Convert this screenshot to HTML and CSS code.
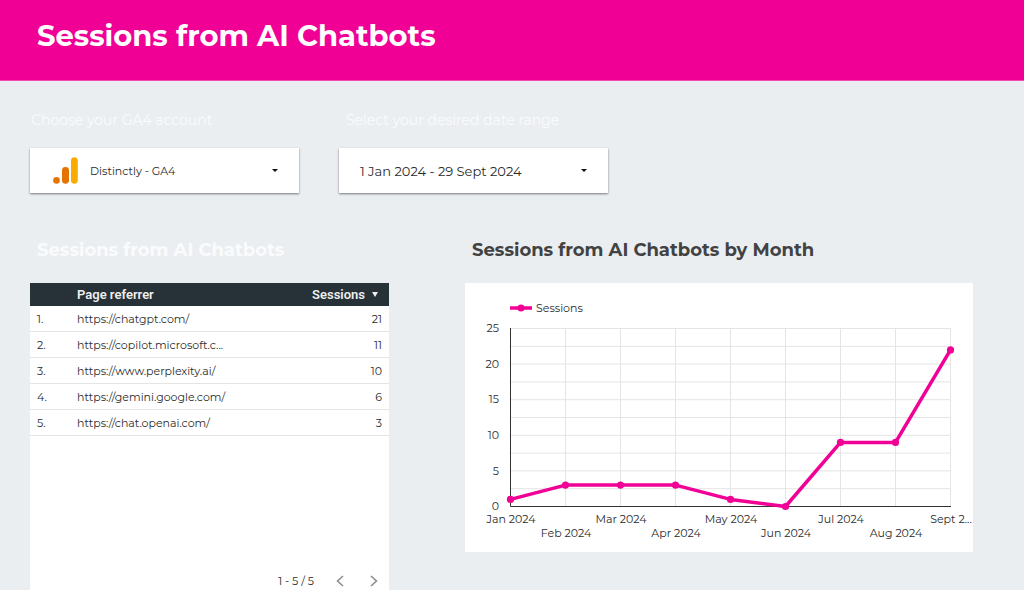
FILE: index.html
```html
<!DOCTYPE html>
<html lang="en-GB">
<head>
<meta charset="utf-8">
<meta name="viewport" content="width=device-width, initial-scale=1">
<title>Sessions from AI Chatbots</title>
<link rel="stylesheet" href="styles.css">
</head>
<body>
<header class="banner">
  <h1 class="banner-title">Sessions from AI Chatbots</h1>
</header>
<main class="content">
  <section class="filters">
    <div class="filter">
      <label class="filter-label" for="account">Choose your GA4 account</label>
      <div class="control account">
        <svg class="ga-logo" viewBox="0 0 25 27" aria-hidden="true">
          <circle cx="3.5" cy="23.4" r="3.3" fill="#e37400"/>
          <rect x="9" y="10" width="7" height="16.7" rx="3.4" fill="#e37400"/>
          <rect x="18" y="0.3" width="6.8" height="26.4" rx="3.4" fill="#f9ab00"/>
        </svg>
        <select class="account-select" id="account">
          <option>Distinctly - GA4</option>
        </select>
        <svg class="caret" viewBox="0 0 6 3" aria-hidden="true"><path d="M0 0h6L3 3z"/></svg>
      </div>
    </div>
    <div class="filter">
      <label class="filter-label date-label" for="dates">Select your desired date range</label>
      <button class="control date" id="dates" type="button" aria-haspopup="dialog">
        <span class="date-text">1 Jan 2024 - 29 Sept 2024</span>
        <svg class="caret" viewBox="0 0 6 3" aria-hidden="true"><path d="M0 0h6L3 3z"/></svg>
      </button>
    </div>
  </section>

  <div class="reports">
    <section class="report">
      <h2 class="report-title light">Sessions from AI Chatbots</h2>
      <div class="panel table-panel">
        <table class="referrers">
          <thead>
            <tr>
              <th class="rank"></th>
              <th>Page referrer</th>
              <th class="count" aria-sort="descending">Sessions<svg class="sort" viewBox="0 0 6 5" aria-hidden="true"><path d="M0 0h6L3 5z"/></svg></th>
            </tr>
          </thead>
          <tbody>
            <tr><td>1.</td><td>https://chatgpt.com/</td><td class="count">21</td></tr>
            <tr><td>2.</td><td>https://copilot.microsoft.c...</td><td class="count">11</td></tr>
            <tr><td>3.</td><td>https://www.perplexity.ai/</td><td class="count">10</td></tr>
            <tr><td>4.</td><td>https://gemini.google.com/</td><td class="count">6</td></tr>
            <tr><td>5.</td><td>https://chat.openai.com/</td><td class="count">3</td></tr>
          </tbody>
        </table>
        <nav class="pager" aria-label="Table pages">
          <span>1 - 5 / 5</span>
          <button class="page-button" type="button" aria-label="Previous page"><svg viewBox="0 0 8 12" aria-hidden="true"><path d="M7 1L1.5 6L7 11"/></svg></button>
          <button class="page-button" type="button" aria-label="Next page"><svg viewBox="0 0 8 12" aria-hidden="true"><path d="M1 1L6.5 6L1 11"/></svg></button>
        </nav>
      </div>
    </section>

    <section class="report">
      <h2 class="report-title">Sessions from AI Chatbots by Month</h2>
      <div class="panel">
        <svg class="chart" viewBox="0 0 508 269" role="img" aria-label="Sessions by month, January to September 2024">
          <path class="grid" d="M45 45.500H486M45 63.300H486M45 81.100H486M45 98.900H486M45 116.700H486M45 134.500H486M45 152.300H486M45 170.100H486M45 187.900H486M45 205.700H486M100.500 45V223M155.500 45V223M210.500 45V223M265.500 45V223M320.500 45V223M375.500 45V223M430.500 45V223M485.500 45V223"/>
          <path class="axis" d="M45.500 45V223.500H486"/>
          <polyline class="series" points="45.5,216.4 100.5,202.1 155.5,202.1 210.5,202.1 265.5,216.4 320.5,223.5 375.5,159.4 430.5,159.4 485.5,66.9"/>
          <g class="marker">
            <circle cx="45.5" cy="216.4" r="3.6"/><circle cx="100.5" cy="202.1" r="3.6"/><circle cx="155.5" cy="202.1" r="3.6"/>
            <circle cx="210.5" cy="202.1" r="3.6"/><circle cx="265.5" cy="216.4" r="3.6"/><circle cx="320.5" cy="223.5" r="3.6"/>
            <circle cx="375.5" cy="159.4" r="3.6"/><circle cx="430.5" cy="159.4" r="3.6"/><circle cx="485.5" cy="66.9" r="3.6"/>
            <circle cx="56" cy="25" r="3.6"/>
          </g>
          <path class="series" d="M45 25H67"/>
          <text class="tick" x="71" y="29">Sessions</text>
          <g class="tick value">
            <text x="34" y="49">25</text><text x="34" y="85">20</text><text x="34" y="120">15</text>
            <text x="34" y="156">10</text><text x="34" y="192">5</text><text x="34" y="227">0</text>
          </g>
          <g class="tick month">
            <text x="46" y="240">Jan 2024</text><text x="101" y="254">Feb 2024</text><text x="156" y="240">Mar 2024</text>
            <text x="211" y="254">Apr 2024</text><text x="266" y="240">May 2024</text><text x="321" y="254">Jun 2024</text>
            <text x="376" y="240">Jul 2024</text><text x="431" y="254">Aug 2024</text><text x="486" y="240">Sept 2...</text>
          </g>
        </svg>
      </div>
    </section>
  </div>
</main>
</body>
</html>
```
FILE: styles.css
```css
* {
  box-sizing: border-box;
}

body {
  display: flex;
  flex-direction: column;
  min-height: 100vh;
  margin: 0;
  background: #ebeef1;
  color: #2b2b2b;
  font-family: Montserrat, Inter, "Open Sans", sans-serif;
  font-size: 11px;
}

.banner {
  padding: 18px 37px 27px;
  background: #f10096;
  border-bottom: 1px solid #f04cb0;
  color: #fff;
}

.banner-title {
  margin: 0;
  font-size: 29px;
  font-weight: 700;
  line-height: 35px;
}

.content {
  display: flex;
  flex: 1;
  flex-direction: column;
  padding: 29px 51px 0 30px;
}

.filters {
  display: grid;
  grid-template-columns: 269fr 269fr 325fr;
  gap: 40px;
}

.filter {
  display: flex;
  flex-direction: column;
  gap: 18px;
}

.filter-label {
  padding-left: 1px;
  color: #fafbfc;
  font-size: 14px;
  line-height: 20px;
}

.date-label {
  padding-left: 7px;
}

.control {
  display: flex;
  align-items: center;
  height: 45px;
  padding: 0 21px;
  border: 0;
  background: #fff;
  box-shadow: 0 1px 2px rgba(0, 0, 0, 0.5);
  color: #2b2b2b;
  font-family: inherit;
  text-align: left;
}

.account {
  gap: 12px;
  padding-left: 23px;
}

.ga-logo {
  width: 25px;
  height: 27px;
}

.account-select {
  flex: 1;
  min-width: 0;
  padding: 0;
  border: 0;
  appearance: none;
  background: none;
  color: inherit;
  font: inherit;
}

.date-text {
  flex: 1;
  font-size: 13px;
}

.caret {
  width: 6px;
  height: 3px;
  fill: #111;
}

.reports {
  display: grid;
  flex: 1;
  grid-template-columns: 359fr 508fr;
  gap: 76px;
  padding-top: 44px;
}

.report {
  display: flex;
  flex-direction: column;
  gap: 20px;
}

.report-title {
  margin: 0;
  padding-left: 7px;
  color: #424242;
  font-size: 18px;
  font-weight: 700;
  line-height: 26px;
}

.report-title.light {
  color: #fafbfc;
}

.panel {
  background: #fff;
}

.table-panel {
  display: flex;
  flex: 1;
  flex-direction: column;
  justify-content: space-between;
}

.referrers {
  width: 100%;
  border-spacing: 0;
}

.referrers th {
  height: 23px;
  padding: 0;
  background: #263238;
  color: #eee;
  font-family: Roboto, sans-serif;
  font-size: 13px;
  font-weight: 600;
  text-align: left;
}

.referrers td {
  height: 26px;
  padding: 0;
  border-bottom: 1px solid #e4e4e4;
}

.referrers .rank {
  width: 47px;
}

.referrers td:first-child {
  padding-left: 7px;
}

.referrers .count {
  padding-right: 7px;
  text-align: right;
}

.referrers th.count {
  padding-right: 11px;
}

.sort {
  width: 6px;
  height: 5px;
  margin: 0 0 2px 7px;
  fill: #eee;
}

.pager {
  display: flex;
  align-items: center;
  justify-content: flex-end;
  gap: 18px;
  padding: 0 7px 2px 0;
}

.page-button {
  display: flex;
  justify-content: center;
  width: 16px;
  padding: 1px 0;
  border: 0;
  background: none;
}

.page-button svg {
  width: 8px;
  height: 12px;
  fill: none;
  stroke: #8a8a8a;
  stroke-width: 1.5;
}

.chart {
  display: block;
  width: 100%;
}

.grid {
  fill: none;
  stroke: #e4e4e4;
}

.axis {
  fill: none;
  stroke: #333;
}

.series {
  fill: none;
  stroke: #f10096;
  stroke-width: 3.5;
  stroke-linejoin: round;
}

.marker {
  fill: #f10096;
}

.tick {
  fill: #2b2b2b;
  font-size: 11px;
}

.value {
  text-anchor: end;
}

.month {
  text-anchor: middle;
}
```
